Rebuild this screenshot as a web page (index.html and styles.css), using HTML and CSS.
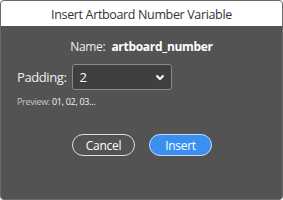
FILE: index.html
```html
<!DOCTYPE html>
<html lang="en">
<head>
    <meta charset="UTF-8">
    <title>Insert Artboard Number Variable</title>
    <link rel="stylesheet" href="styles.css">
</head>
<body>
    <div class="dialog">
        <div class="titlebar">Insert Artboard Number Variable</div>
        <div class="content">
            <div class="name-row">
                <span class="name-label">Name:</span>
                <span class="name-value">artboard_number</span>
            </div>
            <div class="padding-row">
                <label class="padding-label">Padding:</label>
                <div class="select">
                    <span>2</span>
                    <svg class="chevron" width="10" height="7" viewBox="0 0 10 7">
                        <path d="M1.5 1.5 L5 5 L8.5 1.5" fill="none" stroke="#fff" stroke-width="2"/>
                    </svg>
                </div>
            </div>
            <div class="preview">Preview: <span class="preview-value">01, 02, 03...</span></div>
            <div class="buttons">
                <button class="btn cancel">Cancel</button>
                <button class="btn insert">Insert</button>
            </div>
        </div>
    </div>
</body>
</html>
```

FILE: styles.css
```css
body {
    margin: 0;
    background: #fff;
    font-family: "Open Sans", "Noto Sans", sans-serif;
}
.dialog {
    width: 283px;
    height: 200px;
    box-sizing: border-box;
    border: 1px solid #6a6a6a;
    border-radius: 4px;
    overflow: hidden;
    background: #535353;
    display: flex;
    flex-direction: column;
}
.titlebar {
    height: 25px;
    background: #fff;
    color: #333;
    font-size: 12.5px;
    line-height: 27px;
    text-align: center;
    letter-spacing: -0.35px;
}
.content {
    padding: 0 16px;
    color: #fff;
}
.name-row {
    display: flex;
    justify-content: center;
    gap: 6px;
    margin-top: 12px;
    font-size: 12px;
    letter-spacing: -0.3px;
    line-height: 18px;
}
.name-label {
    color: #eee;
}
.name-value {
    font-weight: bold;
}
.padding-row {
    display: flex;
    align-items: center;
    gap: 6px;
    margin-top: 8px;
}
.padding-label {
    font-size: 13px;
    letter-spacing: -0.4px;
    color: #eee;
}
.select {
    width: 100px;
    height: 26px;
    box-sizing: border-box;
    border: 1px solid #8a8a8a;
    border-radius: 3px;
    background: #3f3f3f;
    display: flex;
    align-items: center;
    justify-content: space-between;
    padding: 0 6px 0 6px;
    font-size: 13px;
}
.preview {
    margin-top: 6px;
    font-size: 9px;
    letter-spacing: -0.3px;
    color: #c8c8c8;
    line-height: 12px;
}
.preview-value {
    color: #f4f4f4;
}
.buttons {
    display: flex;
    justify-content: center;
    gap: 14px;
    margin-top: 26px;
    padding-left: 1px;
}
.btn {
    width: 63px;
    height: 22px;
    border-radius: 11px;
    font-family: inherit;
    font-size: 12px;
    letter-spacing: -0.3px;
    color: #fff;
    padding: 0;
}
.cancel {
    background: transparent;
    border: 1px solid #dcdcdc;
}
.insert {
    background: #3a8ff0;
    border: 1px solid #c9dcf5;
}
```
